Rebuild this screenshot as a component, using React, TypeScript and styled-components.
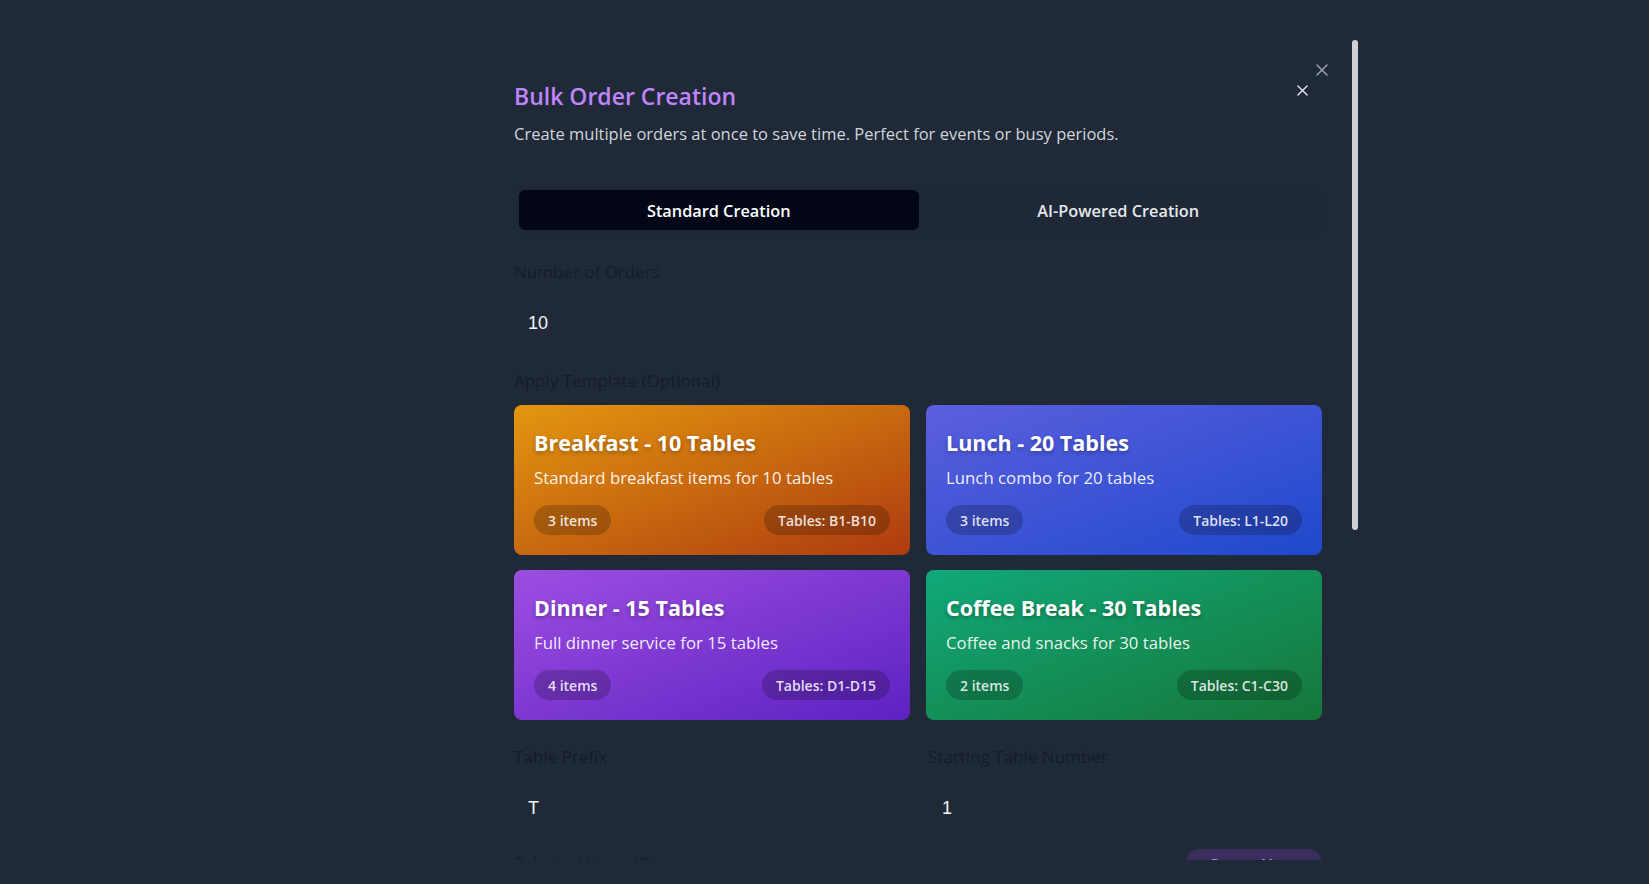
import React from "react";
import styled, { createGlobalStyle } from "styled-components";

const GlobalStyle = createGlobalStyle`
  * { box-sizing: border-box; }
  html, body { margin: 0; padding: 0; }
  body {
    background: #1f2937;
    font-family: "Open Sans", "Noto Sans", sans-serif;
    color: #e5e7eb;
    overflow: hidden;
  }
`;

const Page = styled.div`
  width: 100%;
  height: 884px;
  display: flex;
  align-items: flex-start;
  padding: 38px 0 0 490px;
`;

const Dialog = styled.div`
  position: relative;
  width: 870px;
  height: 822px;
  overflow: hidden;
`;

const Content = styled.div`
  display: flex;
  flex-direction: column;
  padding: 42px 38px 40px 24px;
`;

const CloseButton = styled.button<{ $tone: "muted" | "bright" }>`
  position: absolute;
  top: ${(p) => (p.$tone === "muted" ? "26px" : "46px")};
  right: ${(p) => (p.$tone === "muted" ? "32px" : "52px")};
  width: 12px;
  height: 12px;
  padding: 0;
  border: 0;
  background: transparent;
  color: ${(p) => (p.$tone === "muted" ? "#9ca3af" : "#e5e7eb")};
  display: flex;
  align-items: center;
  justify-content: center;
  cursor: pointer;
`;

const ScrollThumb = styled.div`
  position: absolute;
  top: 2px;
  right: 2px;
  width: 6px;
  height: 490px;
  border-radius: 3px;
  background: #cdd1d6;
`;

const Header = styled.header`
  display: flex;
  flex-direction: column;
  gap: 10px;
`;

const Title = styled.h2`
  margin: 0;
  font-size: 23px;
  line-height: 32px;
  font-weight: 600;
  color: #c084fc;
`;

const Subtitle = styled.p`
  margin: 0;
  font-size: 16.5px;
  line-height: 24px;
  color: #d1d5db;
`;

const TabList = styled.div`
  margin-top: 40px;
  display: grid;
  grid-template-columns: 1fr 1fr;
  padding: 4px 4px 4px 5px;
  height: 48px;
  border-radius: 8px;
  background: #1e2837;
`;

const Tab = styled.button<{ $active?: boolean }>`
  border: 0;
  border-radius: 6px;
  padding-top: 2px;
  font-family: inherit;
  font-size: 16.3px;
  font-weight: 600;
  color: ${(p) => (p.$active ? "#ffffff" : "#e5e7eb")};
  background: ${(p) => (p.$active ? "#020617" : "transparent")};
  cursor: pointer;
`;

const Field = styled.div<{ $mt?: number }>`
  display: flex;
  flex-direction: column;
  gap: 10px;
  margin-top: ${(p) => p.$mt ?? 0}px;
  min-width: 0;
`;

const Label = styled.label`
  font-size: 17px;
  line-height: 24px;
  font-weight: 500;
  color: #141c2a;
`;

const Input = styled.input`
  height: 56px;
  width: 100%;
  padding: 2px 14px 0;
  border: 0;
  outline: none;
  background: transparent;
  color: #f3f4f6;
  font-family: "Liberation Sans", Arial, sans-serif;
  font-size: 18px;
`;

const Section = styled.section<{ $mt: number }>`
  display: flex;
  flex-direction: column;
  gap: 12px;
  margin-top: ${(p) => p.$mt}px;
`;

const TemplateGrid = styled.div`
  display: grid;
  grid-template-columns: 1fr 1fr;
  column-gap: 16px;
  row-gap: 15px;
`;

const Card = styled.button<{ $from: string; $to: string }>`
  height: 150px;
  padding: 24px 20px 20px;
  border: 0;
  border-radius: 8px;
  text-align: left;
  font-family: inherit;
  color: #ffffff;
  background: linear-gradient(to bottom right, ${(p) => p.$from}, ${(p) => p.$to});
  display: flex;
  flex-direction: column;
  cursor: pointer;
`;

const CardTitle = styled.h3`
  margin: 0;
  font-size: 21.5px;
  line-height: 28px;
  font-weight: 700;
  text-shadow: 0 2px 4px rgba(0, 0, 0, 0.3);
`;

const CardDesc = styled.p`
  margin: 9px 0 0;
  font-size: 16.8px;
  line-height: 24px;
  font-weight: 500;
  color: rgba(255, 255, 255, 0.92);
`;

const CardFooter = styled.div`
  margin-top: auto;
  display: flex;
  justify-content: space-between;
  align-items: center;
`;

const Chip = styled.span`
  height: 30px;
  padding: 0 14px;
  border-radius: 999px;
  background: rgba(0, 0, 0, 0.2);
  color: rgba(255, 255, 255, 0.85);
  font-size: 14px;
  font-weight: 600;
  display: inline-flex;
  align-items: center;
`;

const FieldRow = styled.div`
  margin-top: 25px;
  display: grid;
  grid-template-columns: 1fr 1fr;
  gap: 20px;
`;

const SelectedHeader = styled.div`
  margin-top: 14px;
  height: 28px;
  display: flex;
  align-items: center;
  justify-content: space-between;
`;

const SelectPill = styled.button`
  height: 28px;
  width: 136px;
  border: 0;
  border-radius: 999px;
  background: #3b2d5e;
  color: #a78bfa;
  font-family: inherit;
  font-size: 13px;
  font-weight: 600;
`;

const ItemList = styled.div`
  margin-top: 12px;
  height: 420px;
  border-radius: 8px;
  background: #1c2532;
`;

const XIcon = ({ size }: { size: number }) => (
  <svg width={size} height={size} viewBox="0 0 12 12" fill="none" stroke="currentColor" strokeWidth="1.5" strokeLinecap="round">
    <path d="M1 1 L11 11 M11 1 L1 11" />
  </svg>
);

type Template = {
  title: string;
  desc: string;
  items: number;
  tables: string;
  from: string;
  to: string;
};

const templates: Template[] = [
  { title: "Breakfast - 10 Tables", desc: "Standard breakfast items for 10 tables", items: 3, tables: "B1-B10", from: "#e3970f", to: "#ae3b10" },
  { title: "Lunch - 20 Tables", desc: "Lunch combo for 20 tables", items: 3, tables: "L1-L20", from: "#5c5fde", to: "#1e49cc" },
  { title: "Dinner - 15 Tables", desc: "Full dinner service for 15 tables", items: 4, tables: "D1-D15", from: "#9d4ee2", to: "#5d22c2" },
  { title: "Coffee Break - 30 Tables", desc: "Coffee and snacks for 30 tables", items: 2, tables: "C1-C30", from: "#11a97a", to: "#167638" },
];

export default function App() {
  return (
    <>
      <GlobalStyle />
      <Page>
        <Dialog role="dialog">
          <CloseButton $tone="muted" aria-label="Close">
            <XIcon size={12} />
          </CloseButton>
          <CloseButton $tone="bright" aria-label="Close dialog">
            <XIcon size={11} />
          </CloseButton>
          <ScrollThumb />
          <Content>
            <Header>
              <Title>Bulk Order Creation</Title>
              <Subtitle>Create multiple orders at once to save time. Perfect for events or busy periods.</Subtitle>
            </Header>

            <TabList>
              <Tab $active>Standard Creation</Tab>
              <Tab>AI-Powered Creation</Tab>
            </TabList>

            <Field $mt={26}>
              <Label>Number of Orders</Label>
              <Input value="10" readOnly />
            </Field>

            <Section $mt={19}>
              <Label>Apply Template (Optional)</Label>
              <TemplateGrid>
                {templates.map((t) => (
                  <Card key={t.title} $from={t.from} $to={t.to}>
                    <CardTitle>{t.title}</CardTitle>
                    <CardDesc>{t.desc}</CardDesc>
                    <CardFooter>
                      <Chip>{t.items} items</Chip>
                      <Chip>Tables: {t.tables}</Chip>
                    </CardFooter>
                  </Card>
                ))}
              </TemplateGrid>
            </Section>

            <FieldRow>
              <Field>
                <Label>Table Prefix</Label>
                <Input value="T" readOnly />
              </Field>
              <Field>
                <Label>Starting Table Number</Label>
                <Input value="1" readOnly />
              </Field>
            </FieldRow>

            <SelectedHeader>
              <Label>Selected Items (0)</Label>
              <SelectPill>Browse Menu</SelectPill>
            </SelectedHeader>
            <ItemList />
          </Content>
        </Dialog>
      </Page>
    </>
  );
}
